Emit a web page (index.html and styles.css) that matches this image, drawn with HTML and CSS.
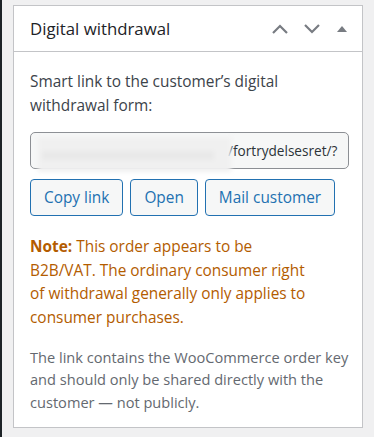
FILE: index.html
```html
<!DOCTYPE html>
<html lang="en">
<head>
    <meta charset="UTF-8">
    <meta name="viewport" content="width=device-width, initial-scale=1.0">
    <title>Digital withdrawal</title>
    <link rel="stylesheet" href="styles.css">
</head>
<body>
    <div class="page">
        <div class="postbox">
            <div class="postbox-header">
                <h2>Digital withdrawal</h2>
                <div class="handle-actions">
                    <button class="handle" aria-label="Move up">
                        <svg width="18" height="12" viewBox="0 0 18 12"><path d="M2 10 L9 3 L16 10" fill="none" stroke="#787c82" stroke-width="2.2"/></svg>
                    </button>
                    <button class="handle" aria-label="Move down">
                        <svg width="18" height="12" viewBox="0 0 18 12"><path d="M2 2 L9 9 L16 2" fill="none" stroke="#787c82" stroke-width="2.2"/></svg>
                    </button>
                    <button class="handle toggle" aria-label="Toggle panel">
                        <svg width="10" height="8" viewBox="0 0 10 8"><path d="M0 7 L5 1 L10 7 Z" fill="#787c82"/></svg>
                    </button>
                </div>
            </div>
            <div class="inside">
                <p>Smart link to the customer’s digital withdrawal form:</p>
                <div class="link-field">
                    <span class="blurred"></span><span class="link-tail">/fortrydelsesret/?</span>
                </div>
                <div class="actions">
                    <button class="btn">Copy link</button>
                    <button class="btn">Open</button>
                    <button class="btn">Mail customer</button>
                </div>
                <p class="note"><strong>Note:</strong> This order appears to be B2B/VAT. The ordinary consumer right of withdrawal generally only applies to consumer purchases.</p>
                <p class="hint">The link contains the WooCommerce order key and should only be shared directly with the customer — not publicly.</p>
            </div>
        </div>
    </div>
</body>
</html>
```

FILE: styles.css
```css
body {
    margin: 0;
    background: #f0f0f1;
    font-family: "Open Sans", "Noto Sans", sans-serif;
    color: #3c434a;
}

.page {
    border-left: 2px solid #1d2327;
    padding: 5px 12px 14px 11px;
    min-height: 420px;
}

.postbox {
    background: #fff;
    border: 1px solid #c3c4c7;
    width: 348px;
}

.postbox-header {
    display: flex;
    align-items: center;
    justify-content: space-between;
    height: 45px;
    border-bottom: 1px solid #c3c4c7;
    padding: 0 8px 0 16px;
}

.postbox-header h2 {
    margin: 0;
    font-size: 16.8px;
    font-weight: 400;
    color: #1d2327;
}

.handle-actions {
    display: flex;
    align-items: center;
    gap: 4px;
}

.handle {
    background: none;
    border: none;
    padding: 0;
    width: 28px;
    height: 30px;
    display: flex;
    align-items: center;
    justify-content: center;
    cursor: pointer;
}

.handle.toggle {
    width: 24px;
}

.inside {
    padding: 18px 13px 14px 16px;
}

.inside p {
    margin: 0;
    font-size: 15.4px;
    line-height: 23.6px;
}

.link-field {
    position: relative;
    margin-top: 15px;
    height: 35px;
    border: 1px solid #8c8f94;
    border-radius: 5px;
    background: #f6f7f7;
    display: flex;
    align-items: center;
    font-size: 13.6px;
    color: #2c3338;
}

.blurred {
    position: relative;
    z-index: 1;
    flex: none;
    width: 193px;
    height: 35px;
    margin: 4px 0 -4px 7px;
    background:
        linear-gradient(#e9e9e9, #e9e9e9) 4px 14px / 172px 9px no-repeat,
        #f0f0f0;
    filter: blur(2px);
}

.link-tail {
    margin-left: -3px;
}

.actions {
    display: flex;
    gap: 7px;
    margin-top: 10px;
}

.btn {
    height: 37px;
    padding: 0 13px;
    background: #f6f7f7;
    color: #2271b1;
    border: 1px solid #2271b1;
    border-radius: 4px;
    font-family: inherit;
    font-size: 15.4px;
    cursor: pointer;
}

.inside p.note {
    margin-top: 19px;
    color: #b35c00;
    padding-right: 28px;
}

.inside p.hint {
    margin-top: 16px;
    font-size: 14.6px;
    line-height: 22.6px;
    color: #646970;
}
```
